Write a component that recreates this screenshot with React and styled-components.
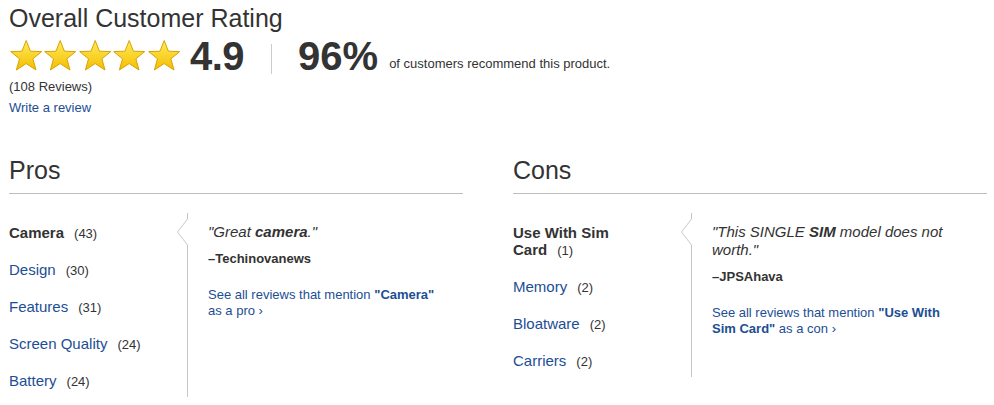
import React from "react";
import styled, { createGlobalStyle } from "styled-components";

const GlobalStyle = createGlobalStyle`
  body {
    margin: 0;
    background: #fff;
    font-family: "Liberation Sans", Arial, Helvetica, sans-serif;
    color: #333;
  }
`;

const Page = styled.div`
  padding: 3px 0 0 9px;
  width: 978px;
`;

const Title = styled.h1`
  margin: 0;
  font-size: 25px;
  font-weight: normal;
  line-height: 30px;
  color: #333;
`;

const RatingRow = styled.div`
  display: flex;
  align-items: center;
  height: 40px;
  margin-top: 3px;
`;

const Stars = styled.div`
  display: flex;
`;

const Score = styled.span`
  font-size: 40px;
  font-weight: bold;
  letter-spacing: -0.5px;
  margin-left: 9px;
  line-height: 40px;
  color: #333;
`;

const Divider = styled.span`
  width: 1px;
  height: 30px;
  background: #ccc;
  margin: 6px 26px 0 27px;
`;

const Percent = styled.span`
  font-size: 40px;
  font-weight: bold;
  line-height: 40px;
  color: #333;
`;

const Recommend = styled.span`
  font-size: 13px;
  margin: 14px 0 0 11px;
`;

const Small = styled.div`
  font-size: 13px;
  line-height: 21px;
  color: #333;
`;

const Link = styled.a`
  color: #1c4e94;
  text-decoration: none;
  cursor: pointer;
`;

const Sections = styled.div`
  display: grid;
  grid-template-columns: 454px 474px;
  column-gap: 50px;
  margin-top: 37px;
`;

const Heading = styled.h2`
  margin: 0;
  font-size: 25px;
  font-weight: normal;
  line-height: 30px;
  padding-bottom: 8px;
  border-bottom: 1px solid #bdbdbd;
`;

const Body = styled.div`
  display: flex;
  margin-top: 19px;
`;

const List = styled.ul`
  list-style: none;
  margin: 0;
  padding: 11px 28px 8px 0;
  width: 150px;
  display: flex;
  flex-direction: column;
  gap: 20px;
`;

const Item = styled.li`
  font-size: 15px;
  line-height: 17px;
  font-weight: ${(p) => (p.$active ? "bold" : "normal")};
  color: ${(p) => (p.$active ? "#333" : "#1c4e94")};
  cursor: pointer;
`;

const Count = styled.span`
  font-size: 13px;
  line-height: 13px;
  font-weight: normal;
  color: #333;
  margin-left: 10px;
`;

const Panel = styled.div`
  position: relative;
  border-left: 1px solid #c8c8c8;
  padding: 10px 0 0 20px;
  flex: 1;
`;

const Pointer = styled.svg`
  position: absolute;
  left: -11px;
  top: 6px;
`;

const Content = styled.div`
  width: 236px;
`;

const Quote = styled.p`
  margin: 0;
  font-size: 15px;
  line-height: 18px;
  font-style: italic;
  color: #333;
`;

const Author = styled.div`
  margin-top: 10px;
  font-size: 13px;
  line-height: 16px;
  font-weight: bold;
`;

const SeeAll = styled(Link)`
  display: block;
  margin-top: 20px;
  font-size: 13px;
  line-height: 16px;
`;

const Star = () => (
  <svg width="34.4" height="34" viewBox="0 0 34 34">
    <defs>
      <linearGradient id="sg" x1="0" y1="0" x2="0" y2="1">
        <stop offset="0" stopColor="#ffec5c" />
        <stop offset="1" stopColor="#f4bd00" />
      </linearGradient>
    </defs>
    <polygon
      points="17,1.5 21.2,12.2 32.5,12.6 23.7,19.8 26.8,31 17,24.6 7.2,31 10.3,19.8 1.5,12.6 12.8,12.2"
      fill="url(#sg)"
      stroke="#d9a300"
      strokeWidth="1"
      strokeLinejoin="round"
    />
  </svg>
);

const NotchIcon = () => (
  <Pointer width="12" height="28" viewBox="0 0 12 28">
    <polygon points="12,0 10.5,0 0.5,13 10.5,26 12,26" fill="#fff" />
    <polyline points="10.5,0 0.5,13 10.5,26" fill="none" stroke="#c8c8c8" strokeWidth="1" />
  </Pointer>
);

const Section = ({ title, items, quote, author, mention, kind }) => (
  <div>
    <Heading>{title}</Heading>
    <Body>
      <List>
        {items.map((it, i) => (
          <Item key={it.name} $active={i === 0}>
            {it.name}
            <Count>({it.count})</Count>
          </Item>
        ))}
      </List>
      <Panel>
        <NotchIcon />
        <Content>
          <Quote>{quote}</Quote>
          <Author>–{author}</Author>
          <SeeAll>
            See all reviews that mention <b>"{mention}"</b> as a {kind} ›
          </SeeAll>
        </Content>
      </Panel>
    </Body>
  </div>
);

const pros = [
  { name: "Camera", count: 43 },
  { name: "Design", count: 30 },
  { name: "Features", count: 31 },
  { name: "Screen Quality", count: 24 },
  { name: "Battery", count: 24 },
];

const cons = [
  { name: "Use With Sim Card", count: 1 },
  { name: "Memory", count: 2 },
  { name: "Bloatware", count: 2 },
  { name: "Carriers", count: 2 },
];

export default function App() {
  return (
    <Page>
      <GlobalStyle />
      <Title>Overall Customer Rating</Title>
      <RatingRow>
        <Stars>
          {[0, 1, 2, 3, 4].map((i) => (
            <Star key={i} />
          ))}
        </Stars>
        <Score>4.9</Score>
        <Divider />
        <Percent>96%</Percent>
        <Recommend>of customers recommend this product.</Recommend>
      </RatingRow>
      <Small>(108 Reviews)</Small>
      <Small>
        <Link>Write a review</Link>
      </Small>
      <Sections>
        <Section
          title="Pros"
          items={pros}
          quote={
            <>
              "Great <b>camera</b>."
            </>
          }
          author="Techinovanews"
          mention="Camera"
          kind="pro"
        />
        <Section
          title="Cons"
          items={cons}
          quote={
            <>
              "This SINGLE <b>SIM</b> model does not worth."
            </>
          }
          author="JPSAhava"
          mention="Use With Sim Card"
          kind="con"
        />
      </Sections>
    </Page>
  );
}
